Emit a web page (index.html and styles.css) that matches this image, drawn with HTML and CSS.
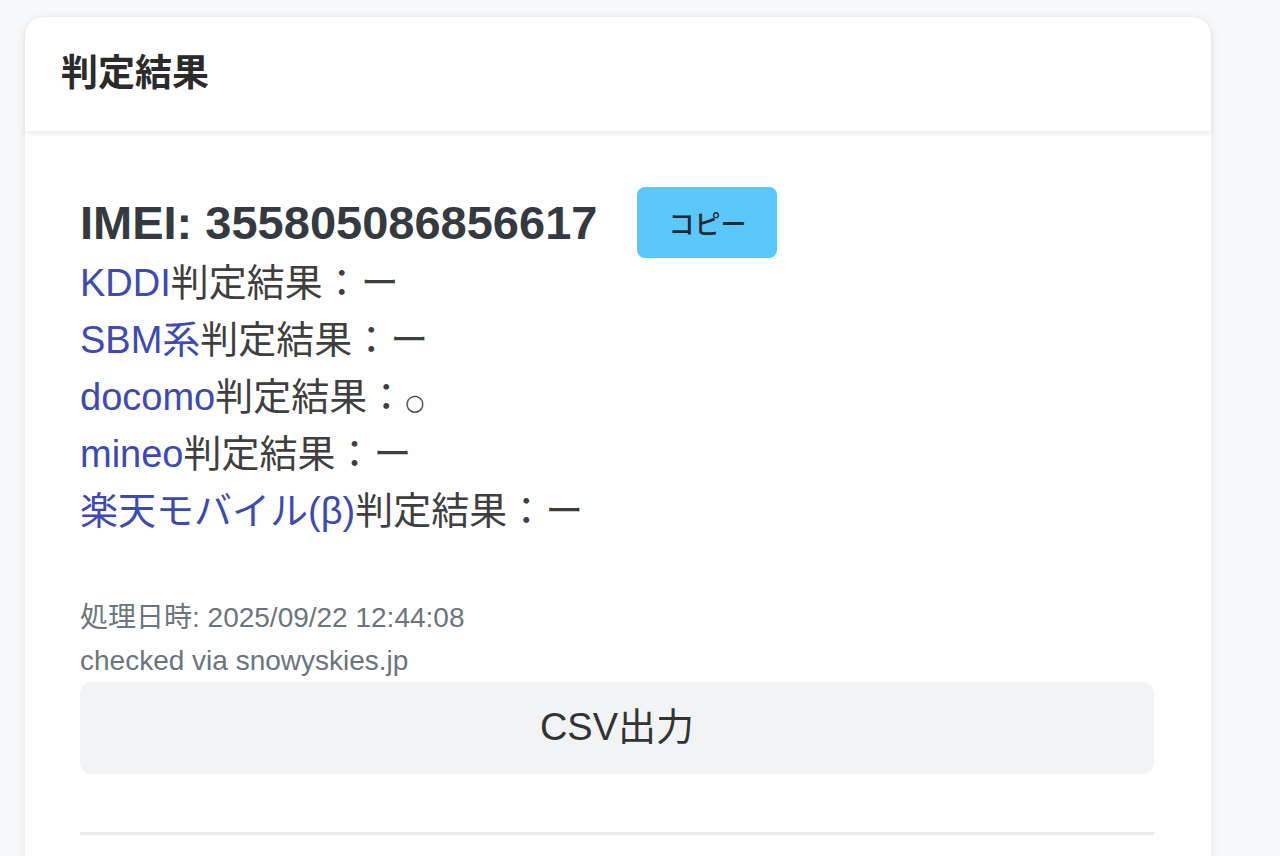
FILE: index.html
```html
<!DOCTYPE html>
<html lang="ja">
<head>
<meta charset="utf-8">
<title>判定結果</title>
<link rel="stylesheet" href="styles.css">
</head>
<body>
<div class="card">
  <div class="card-header">判定結果</div>
  <div class="card-body">
    <div class="imei-row">
      <h5 class="imei">IMEI: 355805086856617</h5>
      <button class="btn-copy">コピー</button>
    </div>
    <div class="results">
      <div class="line"><span class="carrier">KDDI</span>判定結果：ー</div>
      <div class="line"><span class="carrier">SBM系</span>判定結果：ー</div>
      <div class="line"><span class="carrier">docomo</span>判定結果：<span class="mark">○</span></div>
      <div class="line"><span class="carrier">mineo</span>判定結果：ー</div>
      <div class="line"><span class="carrier">楽天モバイル(β)</span>判定結果：ー</div>
    </div>
    <div class="meta">
      <div>処理日時: 2025/09/22 12:44:08</div>
      <div>checked via snowyskies.jp</div>
    </div>
    <button class="btn-csv">CSV出力</button>
    <div class="divider"></div>
  </div>
</div>
</body>
</html>
```
FILE: styles.css
```css
html, body {
  margin: 0;
  padding: 0;
}
body {
  background: #f8f9fa;
  font-family: "Liberation Sans", "Noto Sans CJK JP", sans-serif;
  font-size: 38px;
  color: #333;
  height: 856px;
  overflow: hidden;
}
.card {
  margin: 16px 0 0 24px;
  width: 1188px;
  height: 1000px;
  background: #fff;
  border-radius: 20px;
  box-shadow: 0 2px 12px rgba(0, 0, 0, 0.08);
  border: 1px solid #f0f0f0;
  box-sizing: border-box;
}
.card-header {
  height: 114px;
  box-sizing: border-box;
  display: flex;
  align-items: center;
  padding: 0 0 8px 36px;
  font-weight: bold;
  font-size: 37px;
  color: #2b2b2b;
  border-radius: 20px 20px 0 0;
  box-shadow: 0 3px 5px rgba(0, 0, 0, 0.07);
  position: relative;
}
.card-body {
  padding: 56px 57px 0 55px;
}
.imei-row {
  display: flex;
  align-items: center;
  gap: 40px;
  height: 71px;
}
.imei {
  margin: 0;
  font-size: 47px;
  line-height: 57px;
  font-weight: bold;
  color: #343a40;
}
.btn-copy {
  width: 140px;
  height: 71px;
  border: none;
  border-radius: 8px;
  background: #5ac8fa;
  color: #1f2a33;
  font-family: "Noto Sans CJK JP", sans-serif;
  font-size: 26px;
  font-weight: 500;
  padding: 0;
}
.results {
  margin-top: -3px;
}
.line {
  height: 57px;
  line-height: 57px;
  color: #3f3f3f;
  white-space: nowrap;
}
.carrier {
  color: #3d4ab5;
}
.mark {
  font-family: "DejaVu Sans", sans-serif;
  font-size: 22px;
  line-height: 0;
}
.meta {
  margin-top: 56px;
  font-size: 28px;
  line-height: 43px;
  color: #6c757d;
}
.btn-csv {
  display: block;
  margin-top: 0;
  width: 100%;
  height: 92px;
  border: none;
  border-radius: 12px;
  background: #f1f3f5;
  color: #333;
  font-family: "Liberation Sans", "Noto Sans CJK JP", sans-serif;
  font-size: 38px;
  padding: 0 0 10px 0;
}
.divider {
  margin-top: 58px;
  height: 3px;
  background: #e9ecef;
}
```
